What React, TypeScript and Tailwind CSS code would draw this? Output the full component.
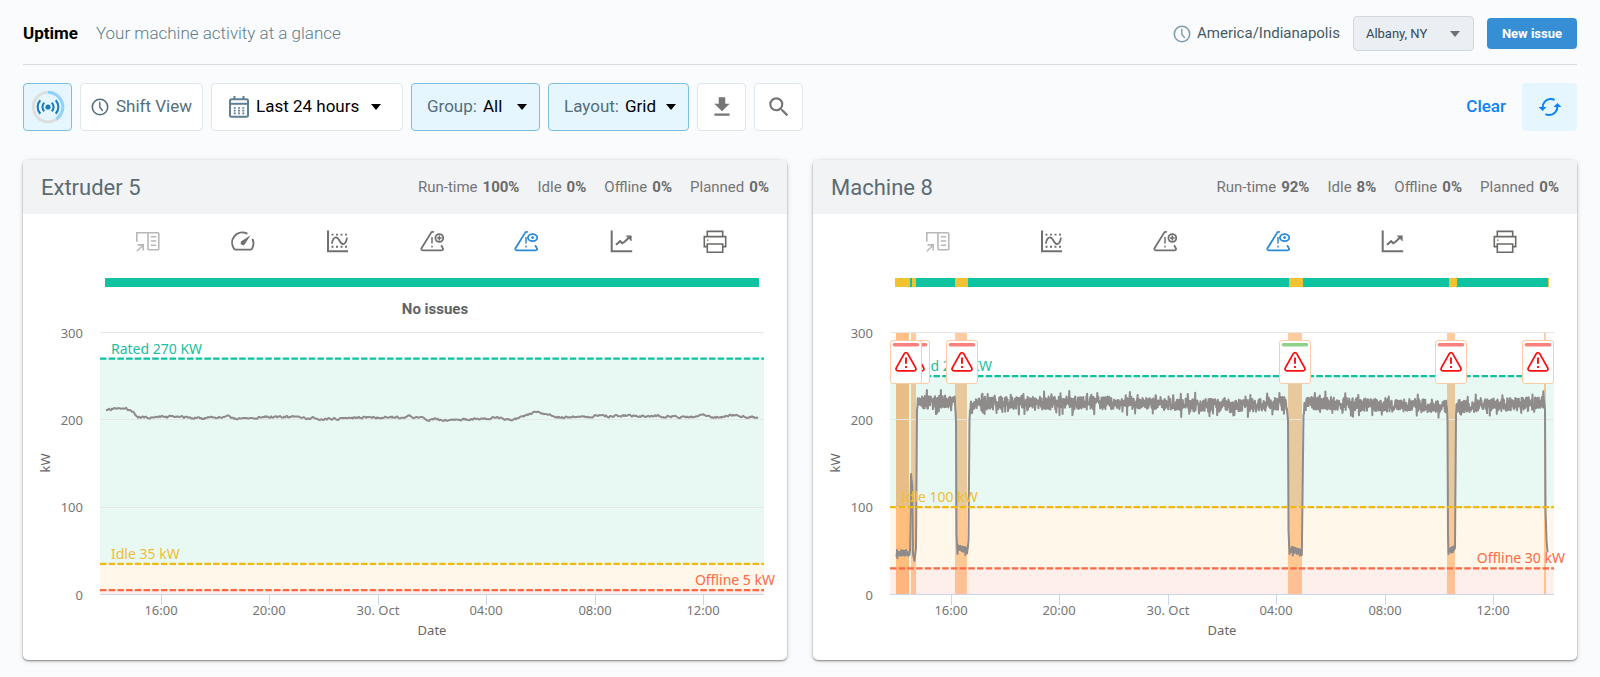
import type { ReactNode } from "react";
import { MdFileDownload, MdSearch } from "react-icons/md";

type Point = [number, number];

type Threshold = { label: string; value: number };

type Issue = { x: number; resolved?: boolean };

type Machine = {
  name: string;
  stats: { label: string; value: string }[];
  hasGauge: boolean;
  idleSegments: { start: number; end: number }[];
  rated: Threshold;
  idle: Threshold;
  offline: Threshold;
  bands: { x: number; width: number; dark?: boolean }[];
  issues: Issue[];
  points: Point[];
};

// small seeded generator so the traces are the same on every render
const createRandom = (seed: number) => {
  let state = seed;
  return () => {
    state = (state * 1664525 + 1013904223) % 4294967296;
    return state / 4294967296;
  };
};

const PLOT_LEFT = 77;
const PLOT_RIGHT = 741;
const PLOT_TOP = 12.5;
const PLOT_BOTTOM = 274.5;

const toY = (kw: number) =>
  PLOT_BOTTOM - (kw / 300) * (PLOT_BOTTOM - PLOT_TOP);

const interpolate = (knots: Point[], x: number) => {
  for (let i = 1; i < knots.length; i++) {
    if (x <= knots[i][0]) {
      const [x0, y0] = knots[i - 1];
      const [x1, y1] = knots[i];
      return y0 + ((y1 - y0) * (x - x0)) / (x1 - x0);
    }
  }
  return knots[knots.length - 1][1];
};

const buildExtruderPoints = () => {
  const random = createRandom(11);
  const knots: Point[] = [
    [83, 91], [90, 89], [103, 88.5], [110, 93], [117, 97.5], [150, 97],
    [175, 98], [200, 97], [220, 98.8], [248, 96.5], [270, 97.5], [300, 99],
    [340, 97.2], [392, 96.8], [404, 99.5], [430, 100.2], [450, 98.5],
    [475, 98], [487, 99], [500, 97.5], [512, 91.8], [525, 96], [540, 97],
    [600, 95.5], [670, 96.5], [680, 95], [690, 97.5], [712, 95.2], [735, 97.5],
  ];
  const points: Point[] = [];
  let drift = 0;
  for (let x = 83; x <= 735; x += 1) {
    drift = drift * 0.6 + (random() - 0.5) * 2;
    points.push([x, interpolate(knots, x) + drift]);
  }
  return points;
};

const buildMachinePoints = () => {
  const random = createRandom(7);
  const points: Point[] = [];
  const noise = (
    from: number,
    to: number,
    startY: number,
    endY: number,
    size: number,
  ) => {
    for (let x = from; x <= to; x += 0.35) {
      const base = startY + ((endY - startY) * (x - from)) / (to - from);
      const spread = random() < 0.14 ? size * 1.9 : size;
      points.push([x, base + (random() * 2 - 1) * spread]);
    }
  };
  noise(83, 97, 232.5, 233, 3);
  points.push([98, 154], [99.3, 166], [100, 234], [101.5, 241], [103, 228], [104, 90]);
  noise(104.5, 142, 82, 82, 6.5);
  points.push([143, 100], [143.5, 215], [144.5, 234]);
  noise(145, 155, 227, 231, 3);
  points.push([155.5, 220], [156.5, 100]);
  noise(157, 166, 88, 84, 6.5);
  noise(166, 330, 83, 83, 6.5);
  noise(330, 430, 84, 86, 6.5);
  noise(430, 474, 86, 83, 6.5);
  points.push([475, 100], [475.5, 210], [476.5, 234]);
  noise(477, 489, 229, 233, 3);
  points.push([489, 220], [490.5, 95]);
  noise(491, 560, 83, 85, 6.5);
  noise(560, 634, 85, 86, 6.5);
  points.push([634.5, 100], [635, 215], [635.5, 234]);
  noise(636, 642, 230, 229, 3);
  points.push([642, 225], [643, 95]);
  noise(643.5, 731, 86, 83, 6.5);
  points.push([732, 90], [732.5, 190], [733.5, 220], [734.5, 232]);
  return points;
};

const machines: Machine[] = [
  {
    name: "Extruder 5",
    stats: [
      { label: "Run-time", value: "100%" },
      { label: "Idle", value: "0%" },
      { label: "Offline", value: "0%" },
      { label: "Planned", value: "0%" },
    ],
    hasGauge: true,
    idleSegments: [],
    rated: { label: "Rated 270 KW", value: 270 },
    idle: { label: "Idle 35 kW", value: 35 },
    offline: { label: "Offline 5 kW", value: 5 },
    bands: [],
    issues: [],
    points: buildExtruderPoints(),
  },
  {
    name: "Machine 8",
    stats: [
      { label: "Run-time", value: "92%" },
      { label: "Idle", value: "8%" },
      { label: "Offline", value: "0%" },
      { label: "Planned", value: "0%" },
    ],
    hasGauge: false,
    idleSegments: [
      { start: 0, end: 2.3 },
      { start: 2.6, end: 3.2 },
      { start: 9.2, end: 11.2 },
      { start: 60.2, end: 62.4 },
      { start: 84.7, end: 85.9 },
      { start: 99.8, end: 100 },
    ],
    rated: { label: "Rated 250 KW", value: 250 },
    idle: { label: "Idle 100 kW", value: 100 },
    offline: { label: "Offline 30 kW", value: 30 },
    bands: [
      { x: 83, width: 13, dark: true },
      { x: 98, width: 5 },
      { x: 142, width: 12 },
      { x: 475, width: 14 },
      { x: 634, width: 8 },
      { x: 731, width: 2 },
    ],
    issues: [
      { x: 85 },
      { x: 77 },
      { x: 133 },
      { x: 466, resolved: true },
      { x: 622 },
      { x: 709 },
    ],
    points: buildMachinePoints(),
  },
];

const timeTicks = [
  { x: 138, label: "16:00" },
  { x: 246, label: "20:00" },
  { x: 355, label: "30. Oct" },
  { x: 463, label: "04:00" },
  { x: 572, label: "08:00" },
  { x: 680, label: "12:00" },
];

const ClockIcon = ({ className }: { className: string }) => (
  <svg viewBox="0 0 18 18" fill="none" stroke="currentColor" className={className}>
    <circle cx="9" cy="9" r="7.7" strokeWidth="1.6" />
    <path d="M8.8 4.3v5l2.6 3.2" strokeWidth="1.4" strokeLinecap="round" />
  </svg>
);

const Caret = ({ className }: { className: string }) => (
  <svg
    viewBox="0 0 10 6"
    fill="currentColor"
    className={`pointer-events-none absolute h-[6px] w-[10px] ${className}`}>
    <path d="M0 0h10L5 6z" />
  </svg>
);

const LiveIcon = () => (
  <svg viewBox="0 0 34 34" fill="none" className="h-[34px] w-[34px]">
    <circle cx="17" cy="17" r="14.7" stroke="#dedede" strokeWidth="3" />
    <path d="M17 2.3a14.7 14.7 0 0 1 8.4 26.8" stroke="#90d2fc" strokeWidth="3" />
    <circle cx="17" cy="17" r="2.6" fill="#1a7bbd" />
    <path
      d="M13.3 12.8a5.6 5.6 0 0 0 0 8.4M20.7 12.8a5.6 5.6 0 0 1 0 8.4M9.3 10.2a10 10 0 0 0 0 13.6M24.7 10.2a10 10 0 0 1 0 13.6"
      stroke="#1a7bbd"
      strokeWidth="2.1"
    />
  </svg>
);

const CalendarIcon = () => (
  <svg viewBox="0 0 20 22" fill="none" className="h-[22px] w-5 text-[#5f8094]">
    <rect x="1" y="3.2" width="18" height="17.6" rx="1.5" stroke="currentColor" strokeWidth="2" />
    <path d="M1 7.8h18" stroke="currentColor" strokeWidth="2" />
    <path d="M5.5 0v4M14.5 0v4" stroke="currentColor" strokeWidth="2" />
    <path
      d="M4.700 12h11M4.700 14.700h11M4.700 17.300h11"
      stroke="currentColor"
      strokeWidth="1.7"
      strokeDasharray="2 2.300"
    />
  </svg>
);

const RefreshIcon = () => (
  <svg viewBox="0 0 24 20" fill="none" className="h-5 w-6 text-[#0a84f5]">
    <path
      d="M4.6 11C4.300 6 8 1.900 12.500 1.900c1.500 0 2.900.3 4.100 1M19.400 9C19.700 14 16 18.100 11.500 18.100c-1.500 0-2.900-.3-4.100-1"
      stroke="currentColor"
      strokeWidth="2"
    />
    <path d="M.5 10h8L4.600 13.900zM23.500 10h-8L19.400 6.100z" fill="currentColor" />
  </svg>
);

const OpenPanelIcon = () => (
  <svg viewBox="0 0 24 24" fill="none" stroke="#b8b8b8" strokeWidth="1.6" className="size-6">
    <path d="M.8 12.800V3.800H12v17M12 3.800h9.800q1 0 1 1v15q0 1-1 1H12M14.800 7.800h5.500M14.800 12h5.500M14.800 16.200h5.500" />
    <path d="M.9 22.300l6-6M1.600 15.900h5.600v5.600" />
  </svg>
);

const GaugeIcon = () => (
  <svg viewBox="0 0 24 24" fill="none" className="size-6">
    <path
      d="M15.700 4.400A10.300 10.300 0 0 0 3 19.700q.6.900 1.800.9h14.400q1.200 0 1.800-.9a10.300 10.300 0 0 0 .7-9"
      stroke="#707070"
      strokeWidth="1.900"
      strokeLinecap="round"
    />
    <path d="M19.600 6.200l-6 9.200a2.300 2.300 0 1 1-3.300-3.200z" fill="#707070" />
  </svg>
);

const RangeChartIcon = () => (
  <svg viewBox="0 0 24 24" fill="none" stroke="#707070" className="size-6">
    <path d="M3 1.400v20.800h20" strokeWidth="2" />
    <path d="M6.500 5.600h16M6.500 17.800h16" strokeWidth="1.900" strokeDasharray="2 2.500" />
    <path d="M6.800 14.700c.6-3.400 2-6.300 4.200-6.300 3.600 0 3.300 6.700 7 6.700 2.200 0 3.500-3 4-6.400" strokeWidth="1.800" />
  </svg>
);

const WarningShape = ({ children, color }: { children: ReactNode; color: string }) => (
  <svg viewBox="0 0 24 24" fill="none" stroke={color} strokeWidth="1.800" className="size-6">
    <path d="M13.800 3.400c-.7-.8-2-.8-2.600.2L1.500 19.300c-.5.9.1 2 1.100 2h19.200c1.100 0 1.600-1 1.100-2l-1.700-3" />
    <path d="M12 8v6.500M12 16.700v1.700" strokeWidth="1.500" />
    {children}
  </svg>
);

const AddIssueIcon = () => (
  <WarningShape color="#707070">
    <circle cx="19.300" cy="9" r="3.900" />
    <path d="M19.300 6.600v4.800M16.900 9h4.800" strokeWidth="1.600" />
  </WarningShape>
);

const ViewIssueIcon = () => (
  <WarningShape color="#2a8ad6">
    <ellipse cx="18.600" cy="8.600" rx="4.700" ry="3.500" />
    <circle cx="18.600" cy="8.600" r="1" fill="#2a8ad6" strokeWidth="1" />
  </WarningShape>
);

const TrendIcon = () => (
  <svg viewBox="0 0 24 24" fill="none" stroke="#707070" strokeWidth="2" className="size-6">
    <path d="M2.700 1.400v20.800h20.500" />
    <path d="M7 15.800l4.200-3.600 2 2 2.500-1.400 5-5" />
    <path d="M17.200 6.800h5.200v5.200z" fill="#707070" strokeWidth="0.500" />
  </svg>
);

const PrinterIcon = () => (
  <svg viewBox="0 0 24 24" fill="none" stroke="#6b6b66" strokeWidth="1.600" className="size-6">
    <path d="M4.300 7.600V2.400h15.400v5.200M4.300 17.600H1.300v-10h21.400v10h-3" />
    <path d="M4.300 15h15.400v8.200H4.300z" />
    <path d="M4 11.200h1.500" strokeWidth="1.300" />
  </svg>
);

const IconButton = ({ label, children }: { label: string; children: ReactNode }) => (
  <button type="button" aria-label={label} className="cursor-pointer">
    {children}
  </button>
);

const IssueMarker = ({ x, resolved }: Issue) => (
  <g transform={`translate(${x} 20)`}>
    <rect x="0.5" y="0.5" width="31" height="43" rx="2.500" fill="#fff" stroke="#fdcba4" />
    <path
      d="M4.500 4.700h23"
      stroke={resolved ? "#8fd08b" : "#fb7f7c"}
      strokeWidth="3.600"
      strokeLinecap="round"
    />
    <path
      d="M14.300 13.600c.8-1.400 2.600-1.400 3.400 0l8 14.300c.8 1.400-.1 3-1.700 3H8c-1.600 0-2.500-1.600-1.700-3z"
      fill="none"
      stroke="#f81010"
      strokeWidth="1.800"
    />
    <path d="M16 17.500v6.300M16 26v1.900" stroke="#f81010" strokeWidth="1.900" />
  </g>
);

const PowerChart = ({ machine }: { machine: Machine }) => {
  const { rated, idle, offline, bands, issues, points } = machine;
  const ratedY = toY(rated.value);
  const idleY = toY(idle.value);
  const offlineY = toY(offline.value);
  const width = PLOT_RIGHT - PLOT_LEFT;
  const trace = points
    .map(([x, y], i) => `${i ? "L" : "M"}${x.toFixed(1)} ${y.toFixed(1)}`)
    .join("");

  return (
    <svg
      viewBox="0 0 764 340"
      role="img"
      aria-label={`${machine.name} power in kW`}
      className="block w-full font-['Noto_Sans',sans-serif] text-[13px]">
      {bands.map((band) => (
        <rect
          key={band.x}
          x={band.x}
          y={PLOT_TOP}
          width={band.width}
          height={PLOT_BOTTOM - PLOT_TOP}
          fill={band.dark ? "#ffbf87" : "#ffcb9f"}
        />
      ))}
      <rect x={PLOT_LEFT} y={ratedY} width={width} height={idleY - ratedY} fill="#19b988" fillOpacity="0.1" />
      <rect x={PLOT_LEFT} y={idleY} width={width} height={offlineY - idleY} fill="#ffaf2d" fillOpacity="0.1" />
      <rect x={PLOT_LEFT} y={offlineY} width={width} height={PLOT_BOTTOM - offlineY} fill="#ff5f2d" fillOpacity="0.1" />

      {[0, 100, 200, 300].map((kw) => (
        <g key={kw}>
          {kw > 0 && (
            <path d={`M${PLOT_LEFT} ${Math.floor(toY(kw)) + 0.5}H${PLOT_RIGHT}`} stroke="#e6e6e6" />
          )}
          <text x="60" y={toY(kw) + 5} textAnchor="end" fill="#757575">
            {kw}
          </text>
        </g>
      ))}

      <path d={`M${PLOT_LEFT} ${PLOT_BOTTOM}H${PLOT_RIGHT}`} stroke="#ccd6eb" />
      {timeTicks.map((tick) => (
        <g key={tick.label}>
          <path d={`M${tick.x}.500 275v10`} stroke="#ccd6eb" />
          <text x={tick.x} y="295" textAnchor="middle" fill="#757575">
            {tick.label}
          </text>
        </g>
      ))}
      <text x="409" y="315" textAnchor="middle" fill="#666">
        Date
      </text>
      <text transform="translate(27 143) rotate(-90)" textAnchor="middle" fill="#666">
        kW
      </text>

      <path d={trace} fill="none" stroke="#8f8b8b" strokeWidth="2" strokeLinejoin="round" />

      <g strokeWidth="2.300" strokeDasharray="6.500 2.200">
        <path d={`M${PLOT_LEFT} ${ratedY}H${PLOT_RIGHT}`} stroke="#0fc19f" />
        <path d={`M${PLOT_LEFT} ${idleY}H${PLOT_RIGHT}`} stroke="#f1b90f" />
        <path d={`M${PLOT_LEFT} ${offlineY}H${PLOT_RIGHT}`} stroke="#fb6a45" />
      </g>
      <g className="text-sm">
        <text x="88" y={ratedY - 5} fill="#19c0a0">{rated.label}</text>
        <text x="88" y={idleY - 5} fill="#f0bd35">{idle.label}</text>
        <text x="752" y={offlineY - 5} textAnchor="end" fill="#fb6a45">{offline.label}</text>
      </g>

      {issues.map((issue) => (
        <IssueMarker key={issue.x} {...issue} />
      ))}
    </svg>
  );
};

const MachineCard = ({ machine }: { machine: Machine }) => {
  return (
    <section className="overflow-hidden rounded-[5px] bg-white shadow-[0_1px_2px_rgba(0,0,0,0.45),0_1px_6px_rgba(0,0,0,0.12)]">
      <header className="flex h-[54px] items-center justify-between bg-[#f2f3f5] px-[18px]">
        <h2 className="text-[22px] text-[#5b6b73]">{machine.name}</h2>
        <dl className="flex gap-[18px] text-[15px] text-[#757575]">
          {machine.stats.map((stat) => (
            <div key={stat.label} className="flex gap-[5px]">
              <dt>{stat.label}</dt>
              <dd className="font-bold text-[#6b6b6b]">{stat.value}</dd>
            </div>
          ))}
        </dl>
      </header>

      <div className="flex h-16 items-center justify-between pr-[60px] pb-[10px] pl-[113px]">
        <IconButton label="Open panel">
          <OpenPanelIcon />
        </IconButton>
        {machine.hasGauge && (
          <IconButton label="Gauge">
            <GaugeIcon />
          </IconButton>
        )}
        <IconButton label="Thresholds">
          <RangeChartIcon />
        </IconButton>
        <IconButton label="Add issue">
          <AddIssueIcon />
        </IconButton>
        <IconButton label="View issues">
          <ViewIssueIcon />
        </IconButton>
        <IconButton label="Trend">
          <TrendIcon />
        </IconButton>
        <IconButton label="Print">
          <PrinterIcon />
        </IconButton>
      </div>

      <div className="relative mr-[28px] ml-[82px] h-[9px] bg-[#0fc3a1]">
        {machine.idleSegments.map(({ start, end }) => (
          <span
            key={start}
            className="absolute inset-y-0 bg-[#f1c232]"
            style={{ left: `${start}%`, width: `${end - start}%` }}
          />
        ))}
      </div>

      <p className="mr-[28px] ml-[88px] h-[33px] pt-[10px] text-center text-[15px] leading-6 font-bold text-[#5f6368]">
        {machine.issues.length === 0 && "No issues"}
      </p>

      <PowerChart machine={machine} />
    </section>
  );
};

export default function App() {
  return (
    <main className="min-h-screen bg-[#fafbfd] px-[23px] pb-4 font-[Roboto,sans-serif]">
      <header className="flex h-[65px] items-center justify-between border-b border-[#d8dde1] pt-[3px]">
        <div className="flex items-baseline gap-[18px] text-[17px]">
          <h1 className="font-bold text-black">Uptime</h1>
          <p className="font-light text-[#607d8b]">Your machine activity at a glance</p>
        </div>
        <div className="flex items-center gap-[13px]">
          <div className="flex items-center gap-[6px] text-[15px] text-[#455a64]">
            <ClockIcon className="h-[18px] w-[18px] text-[#7f9dae]" />
            America/Indianapolis
          </div>
          <div className="relative flex items-center text-[#707070]">
            <select
              aria-label="Location"
              className="h-[35px] w-[121px] appearance-none rounded-[4px] border border-[#cfd8df] bg-[#ebeef3] pl-3 text-[13px] text-[#324a5e]">
              <option>Albany, NY</option>
            </select>
            <Caret className="right-[14px]" />
          </div>
          <button
            type="button"
            className="h-[31px] rounded-[4px] bg-[#368fd4] px-[15px] text-[13px] font-bold text-white">
            New issue
          </button>
        </div>
      </header>

      <div className="flex items-center justify-between pt-[18px] pb-4 text-[17px]">
        <div className="flex gap-2">
          <button
            type="button"
            aria-label="Live"
            className="flex h-12 w-[49px] items-center justify-center rounded-[4px] border border-[#7fbde0] bg-[#e5f6ff]">
            <LiveIcon />
          </button>
          <button
            type="button"
            className="flex h-12 w-[123px] items-center justify-center gap-[7px] rounded-[4px] border border-[#dfe6ea] bg-white text-[#546e7a]">
            <ClockIcon className="h-[18px] w-[18px]" />
            Shift View
          </button>
          <div className="relative flex h-12 w-[192px] items-center gap-[7px] rounded-[4px] border border-[#dfe6ea] bg-white pl-[17px]">
            <CalendarIcon />
            <select aria-label="Period" className="flex-1 appearance-none text-black">
              <option>Last 24 hours</option>
            </select>
            <Caret className="right-[21px]" />
          </div>
          <div className="relative flex h-12 w-[129px] items-center gap-[6px] rounded-[4px] border border-[#7fbde0] bg-[#e5f6ff] pl-[15px]">
            <label htmlFor="group" className="text-[#546e7a]">
              Group:
            </label>
            <select id="group" className="min-w-0 flex-1 appearance-none text-black">
              <option>All</option>
            </select>
            <Caret className="right-[12px]" />
          </div>
          <div className="relative flex h-12 w-[141px] items-center gap-[6px] rounded-[4px] border border-[#7fbde0] bg-[#e5f6ff] pl-[15px]">
            <label htmlFor="layout" className="text-[#546e7a]">
              Layout:
            </label>
            <select id="layout" className="min-w-0 flex-1 appearance-none text-black">
              <option>Grid</option>
            </select>
            <Caret className="right-[12px]" />
          </div>
          <button
            type="button"
            aria-label="Download"
            className="flex h-12 w-[49px] items-center justify-center rounded-[4px] border border-[#dfe6ea] bg-white text-[#757575]">
            <MdFileDownload size={26} />
          </button>
          <button
            type="button"
            aria-label="Search"
            className="flex h-12 w-[49px] items-center justify-center rounded-[4px] border border-[#dfe6ea] bg-white text-[#757575]">
            <MdSearch size={26} />
          </button>
        </div>
        <div className="flex items-center gap-4">
          <button type="button" className="font-medium text-[#0a84f5]">
            Clear
          </button>
          <button
            type="button"
            aria-label="Refresh"
            className="flex h-12 w-[55px] items-center justify-center rounded-[4px] bg-[#e5f6ff]">
            <RefreshIcon />
          </button>
        </div>
      </div>

      <div className="mt-[13px] grid grid-cols-2 gap-[26px]">
        {machines.map((machine) => (
          <MachineCard key={machine.name} machine={machine} />
        ))}
      </div>
    </main>
  );
}
